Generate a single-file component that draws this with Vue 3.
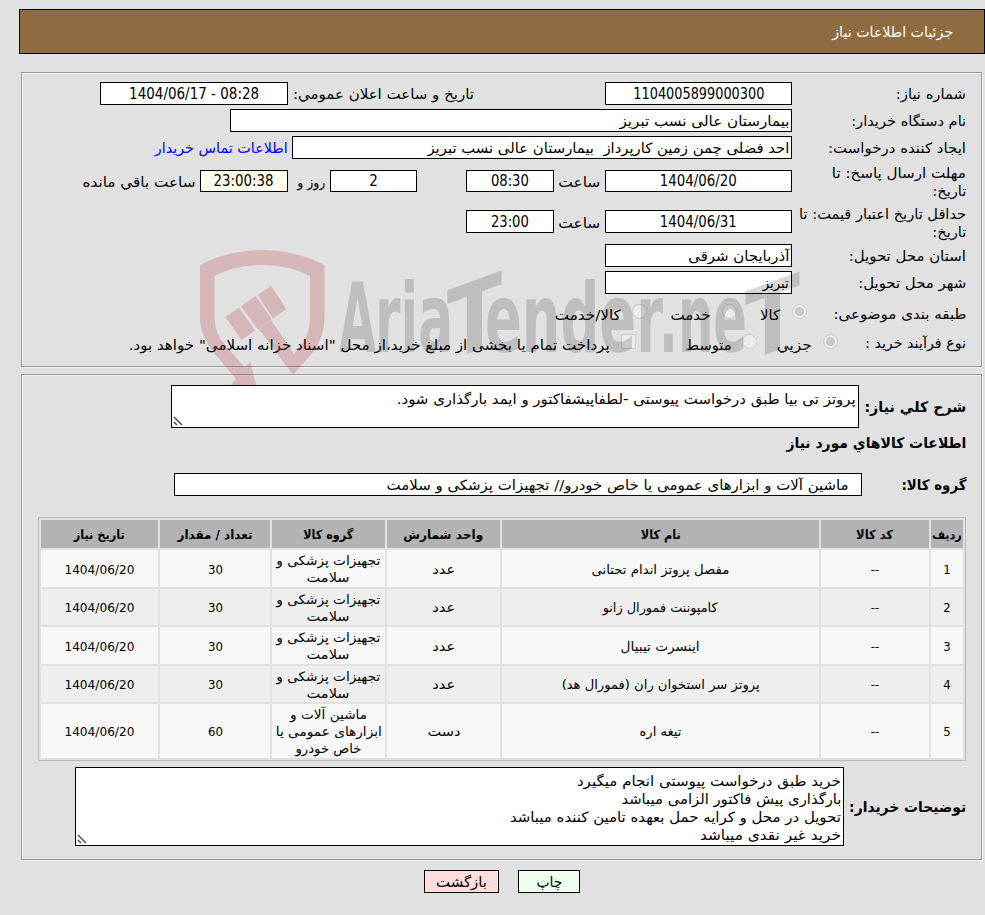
<script setup>
// Squeezes or stretches a single line of text to the given width in pixels.
const vFit = {
  mounted(el, { value }) {
    if (!value) return
    const natural = el.getBoundingClientRect().width
    el.style.transform = `scaleX(${value / natural})`
    el.style.marginLeft = `${value - natural}px`
  },
}

const items = [
  { name: 'مفصل پروتز اندام تحتانی', nameW: 138, unit: 'عدد', unitW: 23, group: [['تجهیزات پزشکی و', 104], ['سلامت', 43]], qty: '30' },
  { name: 'کامپوننت فمورال زانو', nameW: 115, unit: 'عدد', unitW: 23, group: [['تجهیزات پزشکی و', 104], ['سلامت', 43]], qty: '30' },
  { name: 'اینسرت تیبیال', nameW: 79, unit: 'عدد', unitW: 23, group: [['تجهیزات پزشکی و', 104], ['سلامت', 43]], qty: '30' },
  { name: 'پروتز سر استخوان ران (فمورال هد)', nameW: 198, unit: 'عدد', unitW: 23, group: [['تجهیزات پزشکی و', 104], ['سلامت', 43]], qty: '30' },
  { name: 'تیغه اره', nameW: 42, unit: 'دست', unitW: 33, group: [['ماشین آلات و', 77], ['ابزارهای عمومی یا', 106], ['خاص خودرو', 66]], qty: '60' },
]

const heads = [
  ['ردیف', 30], ['کد کالا', 37], ['نام کالا', 40], ['واحد شمارش', 80],
  ['گروه کالا', 50], ['تعداد / مقدار', 75], ['تاریخ نیاز', 51],
]

const notes = [
  ['خرید طبق درخواست پیوستی انجام میگیرد', 264],
  ['بارگذاری پیش فاکتور الزامی میباشد', 220],
  ['تحویل در محل و کرایه حمل بعهده تامین کننده میباشد', 331],
  ['خرید غیر نقدی میباشد', 141],
]
</script>

<template>
  <div class="page" dir="rtl">
    <header class="title"><span class="t" v-fit="121">جزئیات اطلاعات نیاز</span></header>

    <section class="panel need">
      <div class="row">
        <div class="label"><span class="t" v-fit="70">شماره نیاز:</span></div>
        <div class="box mid w187"><span class="t" v-fit="131">1104005899000300</span></div>
        <div class="announce"><span class="t" v-fit="181">تاریخ و ساعت اعلان عمومي:</span></div>
        <div class="box mid w188"><span class="t" dir="ltr" v-fit="130">1404/06/17 - 08:28</span></div>
      </div>
      <div class="row">
        <div class="label"><span class="t" v-fit="115">نام دستگاه خریدار:</span></div>
        <div class="box w562"><span class="t" v-fit="170">بیمارستان عالی نسب تبریز</span></div>
      </div>
      <div class="row">
        <div class="label"><span class="t" v-fit="138">ایجاد کننده درخواست:</span></div>
        <div class="box w500"><span class="t" v-fit="362">احد فضلی چمن زمین کارپرداز&nbsp; بیمارستان عالی نسب تبریز</span></div>
        <a class="contact"><span class="t" v-fit="133">اطلاعات تماس خریدار</span></a>
      </div>
      <div class="row tall">
        <div class="label two">
          <span class="t" v-fit="134">مهلت ارسال پاسخ: تا</span>
          <span class="t" v-fit="34">تاریخ:</span>
        </div>
        <div class="box low mid w187"><span class="t" v-fit="77">1404/06/20</span></div>
        <div class="hour"><span class="t" v-fit="42">ساعت</span></div>
        <div class="box low mid w88"><span class="t" v-fit="38">08:30</span></div>
        <div class="box low mid w87 days"><span class="t">2</span></div>
        <div class="and"><span class="t" v-fit="28">روز و</span></div>
        <div class="box low mid w88 clock"><span class="t" v-fit="60">23:00:38</span></div>
        <div class="left-time"><span class="t" v-fit="113">ساعت باقي مانده</span></div>
      </div>
      <div class="row tall2">
        <div class="label two">
          <span class="t" v-fit="167">حداقل تاریخ اعتبار قیمت: تا</span>
          <span class="t" v-fit="34">تاریخ:</span>
        </div>
        <div class="box mid w187"><span class="t" v-fit="77">1404/06/31</span></div>
        <div class="hour"><span class="t" v-fit="42">ساعت</span></div>
        <div class="box mid w88"><span class="t" v-fit="38">23:00</span></div>
      </div>
      <div class="row">
        <div class="label"><span class="t" v-fit="117">استان محل تحویل:</span></div>
        <div class="box w187"><span class="t" v-fit="101">آذربایجان شرقی</span></div>
      </div>
      <div class="row">
        <div class="label"><span class="t" v-fit="108">شهر محل تحویل:</span></div>
        <div class="box w187"><span class="t" v-fit="26">تبریز</span></div>
      </div>
      <div class="row kinds">
        <div class="label"><span class="t" v-fit="133">طبقه بندی موضوعی:</span></div>
        <i class="radio on g8"></i>
        <span class="opt o1"><span class="t" v-fit="20">کالا</span></span>
        <i class="radio g2"></i>
        <span class="opt o2"><span class="t" v-fit="40">خدمت</span></span>
        <i class="radio g3"></i>
        <span class="opt o3"><span class="t" v-fit="66">کالا/خدمت</span></span>
      </div>
      <div class="row process">
        <div class="label"><span class="t" v-fit="101">نوع فرآیند خرید :</span></div>
        <i class="radio on p1"></i>
        <span class="opt q1"><span class="t" v-fit="35">جزيي</span></span>
        <i class="radio p2"></i>
        <span class="opt q2"><span class="t" v-fit="46">متوسط</span></span>
        <i class="check p3"></i>
        <span class="opt q3"><span class="t" v-fit="481">پرداخت تمام یا بخشی از مبلغ خرید،از محل "اسناد خزانه اسلامی" خواهد بود.</span></span>
      </div>
    </section>

    <section class="panel goods">
      <div class="summary">
        <div class="bold"><span class="t" v-fit="102">شرح کلي نیاز:</span></div>
        <div class="area a1">
          <span class="t" v-fit="459">پروتز تی بیا طبق درخواست پیوستی -لطفاپیشفاکتور و ایمد بارگذاری شود.</span>
          <svg class="grip" viewBox="0 0 10 10"><path d="M1 1L9 9M1 6L4 9" /></svg>
        </div>
      </div>
      <div class="heading bold"><span class="t" v-fit="180">اطلاعات کالاهاي مورد نیاز</span></div>
      <div class="groupline">
        <div class="bold"><span class="t" v-fit="65">گروه کالا:</span></div>
        <div class="box groupbox"><span class="t" v-fit="462">ماشین آلات و ابزارهای عمومی یا خاص خودرو// تجهیزات پزشکی و سلامت</span></div>
      </div>

      <div class="table">
        <div v-for="h in heads" :key="h[0]" class="th"><span class="t" v-fit="h[1]">{{ h[0] }}</span></div>
        <template v-for="(it, i) in items" :key="i">
          <div class="td">{{ i + 1 }}</div>
          <div class="td">--</div>
          <div class="td"><span class="t" v-fit="it.nameW">{{ it.name }}</span></div>
          <div class="td"><span class="t" v-fit="it.unitW">{{ it.unit }}</span></div>
          <div class="td stack"><span v-for="g in it.group" :key="g[0]" class="t" v-fit="g[1]">{{ g[0] }}</span></div>
          <div class="td"><span class="t" v-fit="15">{{ it.qty }}</span></div>
          <div class="td"><span class="t" v-fit="70">1404/06/20</span></div>
        </template>
      </div>

      <div class="buyer">
        <div class="bold"><span class="t" v-fit="117">توضیحات خریدار:</span></div>
        <div class="area a2">
          <span v-for="n in notes" :key="n[0]" class="t" v-fit="n[1]">{{ n[0] }}</span>
          <svg class="grip" viewBox="0 0 10 10"><path d="M1 1L9 9M1 6L4 9" /></svg>
        </div>
      </div>
    </section>

    <div class="actions">
      <button class="print"><span class="t" v-fit="26">چاپ</span></button>
      <button class="back"><span class="t" v-fit="51">بازگشت</span></button>
    </div>

    <svg class="mark" viewBox="190 240 620 150" direction="ltr">
      <g class="crest">
        <path d="M200 265Q229 250 262 250Q295 250 324.500 265V318Q324 336 314 351L293 375L259 329L271 320L294 354L303 343Q310 332 310 318V276Q289 265 262 265Q235 265 214.500 276V318Q215 334 225 345L244.500 367L250.500 362L256.500 386.500L231 384.500L236 379L211 349Q200 334 200 318Z" />
        <path d="M225.500 317L239 307.500L255 330.500L241.500 340ZM241 306L255.500 296L271 318L271 320L259 329L257.500 329ZM257.500 295L271 286L286.500 309L273 318.500Z" />
      </g>
      <g class="word">
        <text x="339" y="352" textLength="37" lengthAdjust="spacingAndGlyphs">A</text>
        <text x="375" y="352" textLength="78" lengthAdjust="spacingAndGlyphs">ria</text>
        <text class="tee" transform="translate(447 361) skewY(-20)" textLength="55" lengthAdjust="spacingAndGlyphs">T</text>
        <text x="485" y="352" textLength="178" lengthAdjust="spacingAndGlyphs">ender</text>
        <text x="659" y="352" textLength="88" lengthAdjust="spacingAndGlyphs">.ne</text>
        <text class="tee" transform="translate(745 362) skewY(-20)" textLength="55" lengthAdjust="spacingAndGlyphs">T</text>
      </g>
    </svg>
  </div>
</template>

<style>
body { background: #e1e1e1; }
</style>

<style scoped>
* { box-sizing: border-box; }
.page {
  position: relative;
  width: 985px;
  height: 915px;
  padding-top: 9px;
  overflow: hidden;
  background: #e1e1e1;
  color: #000;
  font: 14px/18px "DejaVu Sans Condensed", "DejaVu Sans", sans-serif;
}
.t {
  display: inline-block;
  flex: none;
  white-space: pre;
  transform-origin: right center;
}
.title {
  display: flex;
  align-items: center;
  width: 966px;
  height: 45px;
  padding-right: 31px;
  border: 1px solid #000;
  background: #8e6c40;
  color: #fff;
}
.panel {
  width: 961px;
  margin-right: 3px;
  border: 1px solid #9b9b9b;
  box-shadow: 1px 1px 0 #f0f0f0, inset 1px 1px 0 #f0f0f0;
}
.need { height: 295px; margin-top: 18px; padding: 7px 15px 0 0; }
.row { display: flex; align-items: center; height: 27px; }
.row > * { flex: none; }
.label { width: 174px; padding-top: 1px; }
.two { display: flex; flex-direction: column; align-items: flex-start; }
.box {
  display: flex;
  align-items: center;
  height: 23px;
  padding: 0 2px;
  border: 1px solid #000;
  background: #fff;
}
.low { height: 22px; }
.mid { justify-content: center; font-size: 15px; }
.w187 { width: 187px; }
.w188 { width: 188px; }
.w562 { width: 562px; }
.w500 { width: 500px; }
.w88 { width: 88px; }
.w87 { width: 87px; }
.announce { width: 186px; margin-right: 131px; }
.contact { margin-right: 4px; color: #00f; }
.tall { height: 40px; }
.tall2 { height: 41px; }
.tall2 .two { padding-top: 2px; }
.hour { width: 51px; padding: 2px 5px 0 0; }
.days { margin-right: 49px; }
.and { width: 42px; padding: 2px 5px 0 0; }
.clock { background: #ffffee; }
.left-time { padding: 2px 5px 0 0; }
.kinds { height: 35px; }
.process { height: 32px; align-items: flex-start; }
.process .label { padding-top: 3px; }
.radio, .check {
  width: 15px;
  height: 15px;
  border: 1px solid #cacaca;
  border-radius: 50%;
  background: #ececec;
}
.check { border-radius: 2px; }
.on { background: radial-gradient(circle, #cacaca 0 4.2px, #ececec 4.8px); }
.kinds .radio { margin-bottom: 4px; }
.kinds .opt { padding-top: 2px; }
.kinds .g8 { margin-right: -15px; }
.o1 { width: 32px; margin-right: 12px; }
.g2 { margin-right: 11px; }
.o2 { width: 40px; margin-right: 11px; }
.g3 { margin-right: 24px; }
.o3 { margin-right: 11px; }
.process .radio, .process .check { margin-top: 3px; }
.process .opt { padding-top: 5px; }
.p1 { margin-right: -46px; }
.q1 { width: 35px; margin-right: 11px; }
.p2 { margin-right: 20px; }
.q2 { width: 46px; margin-right: 10px; }
.p3 { margin-right: 50px; }
.q3 { margin-right: 11px; }
.goods { height: 486px; margin-top: 7px; padding: 10px 15px 0 0; }
.bold { font-size: 14.5px; font-weight: bold; }
.summary { display: flex; align-items: center; height: 43px; }
.summary .bold { width: 107px; }
.area {
  position: relative;
  display: flex;
  flex-direction: column;
  align-items: flex-start;
  border: 1px solid #000;
  background: #fff;
  padding-right: 2px;
}
.a1 { width: 688px; height: 43px; padding-top: 4px; }
.a2 { width: 769px; height: 79px; padding-top: 4px; }
.grip {
  position: absolute;
  left: 1px;
  bottom: 1px;
  width: 10px;
  height: 10px;
  fill: none;
  stroke: #555;
  stroke-width: 1.6;
}
.heading { margin-top: 6px; height: 18px; }
.groupline { display: flex; align-items: center; margin-top: 21px; height: 23px; }
.groupline .bold { width: 104px; }
.groupbox { width: 688px; padding-right: 12px; }
.table {
  display: grid;
  grid-template-columns: 32px 108px 317px 113px 113px 110px 117px;
  grid-template-rows: 28px 37px 36px 37px 36px 54px;
  gap: 2px;
  width: 928px;
  height: 244px;
  margin-top: 21px;
  padding: 2px;
  border: 1px solid #b8b8b8;
  font-size: 13px;
  line-height: 17px;
}
.th, .td { display: flex; align-items: center; justify-content: center; min-width: 0; padding-top: 1px; }
.th { background: #b3b3b3; font-size: 12.5px; font-weight: bold; }
.td { background: #f7f7f7; }
.td:nth-child(14n + 1), .td:nth-child(14n + 2), .td:nth-child(14n + 3), .td:nth-child(14n + 4),
.td:nth-child(14n + 5), .td:nth-child(14n + 6), .td:nth-child(14n + 7) { background: #eee; }
.stack { flex-direction: column; }
.buyer { display: flex; align-items: center; margin-top: 6px; height: 79px; }
.buyer .bold { width: 122px; }
.actions { display: flex; gap: 19px; margin-top: 10px; padding-right: 405px; }
button {
  display: flex;
  align-items: center;
  justify-content: center;
  height: 23px;
  padding: 0;
  border: 1px solid #000;
  color: #000;
  font: inherit;
}
.print { width: 62px; background: #efe; }
.back { width: 75px; background: #fdd; }
.mark {
  position: absolute;
  left: 190px;
  top: 240px;
  width: 620px;
  height: 150px;
  pointer-events: none;
}
.crest { fill: #a40008; opacity: 0.18; }
.word { opacity: 0.15; font: bold 97px "DejaVu Sans Condensed", "DejaVu Sans", sans-serif; }
</style>
